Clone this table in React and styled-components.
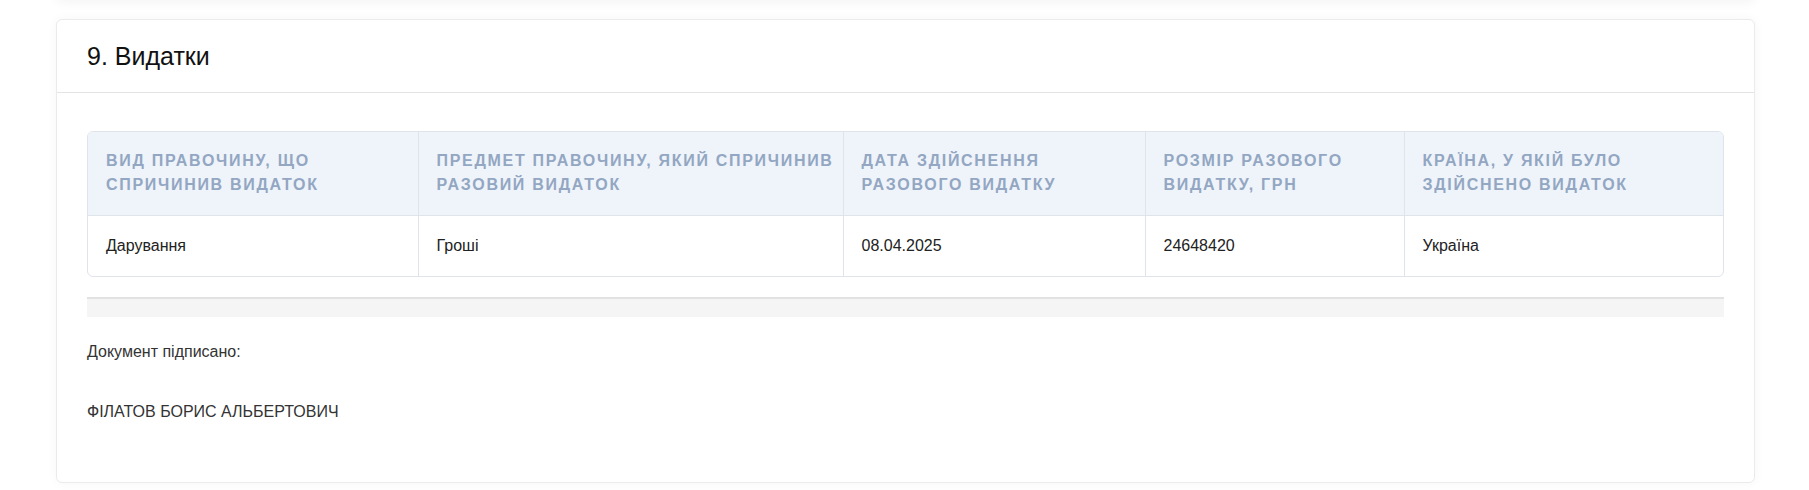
import React from 'react';
import styled, { createGlobalStyle } from 'styled-components';

const GlobalStyle = createGlobalStyle`
  body {
    margin: 0;
    background: #ffffff;
    font-family: "Liberation Sans", Arial, sans-serif;
    color: #222;
  }
`;

const Page = styled.main`
  padding: 0 54px 0 56px;
  overflow: hidden;
  height: 490px;
  box-sizing: border-box;
`;

// bottom edge of the previous section, only its shadow shows
const PrevCard = styled.div`
  height: 20px;
  margin-top: -20px;
  margin-bottom: 19px;
  border-radius: 6px;
  box-shadow: 0 2px 12px rgba(0, 0, 0, 0.05);
`;

const Card = styled.section`
  background: #fff;
  border: 1px solid #ebebeb;
  border-radius: 6px;
  box-shadow: 0 0 12px rgba(0, 0, 0, 0.04);
`;

const CardHeader = styled.div`
  padding: 22px 30px;
  border-bottom: 1px solid #e4e4e4;
`;

const Title = styled.h2`
  margin: 0;
  font-size: 25px;
  line-height: 28px;
  font-weight: 400;
  color: #111;
`;

const CardBody = styled.div`
  padding: 38px 30px 30px;
`;

const TableWrap = styled.div`
  border: 1px solid #dfe4ea;
  border-radius: 6px;
  overflow: hidden;
`;

const Table = styled.table`
  width: 100%;
  border-collapse: collapse;
  table-layout: fixed;
`;

const Th = styled.th`
  background: #eef4fa;
  color: #93a6c2;
  font-size: 16px;
  line-height: 24px;
  font-weight: 700;
  letter-spacing: 1.7px;
  text-transform: uppercase;
  text-align: left;
  vertical-align: top;
  padding: 17px 4px 18px 18px;
  border-left: 1px solid #dfe4ea;
  border-bottom: 1px solid #dfe4ea;

  &:first-child {
    border-left: none;
  }
`;

const Td = styled.td`
  font-size: 16px;
  line-height: 24px;
  color: #222;
  padding: 18px;
  border-left: 1px solid #dfe4ea;

  &:first-child {
    border-left: none;
  }
`;

const ScrollTrack = styled.div`
  margin-top: 20px;
  height: 18px;
  background: #f5f5f5;
  border-top: 2px solid #e2e2e2;
`;

const Signed = styled.div`
  margin-top: 23px;
  font-size: 16px;
  line-height: 24px;
  color: #333;
`;

const Signer = styled.div`
  margin-top: 36px;
  font-size: 16px;
  line-height: 24px;
  color: #333;
  padding-bottom: 28px;
`;

const columns = [
  { title: 'Вид правочину, що спричинив видаток', width: 330 },
  { title: 'Предмет правочину, який спричинив разовий видаток', width: 425 },
  { title: 'Дата здійснення разового видатку', width: 302 },
  { title: 'Розмір разового видатку, грн', width: 259 },
  { title: 'Країна, у якій було здійснено видаток', width: 321 },
];

const rows = [['Дарування', 'Гроші', '08.04.2025', '24648420', 'Україна']];

export default function App() {
  return (
    <>
      <GlobalStyle />
      <Page>
        <PrevCard />
        <Card>
          <CardHeader>
            <Title>9. Видатки</Title>
          </CardHeader>
          <CardBody>
            <TableWrap>
              <Table>
                <colgroup>
                  {columns.map((c) => (
                    <col key={c.title} style={{ width: c.width }} />
                  ))}
                </colgroup>
                <thead>
                  <tr>
                    {columns.map((c) => (
                      <Th key={c.title}>{c.title}</Th>
                    ))}
                  </tr>
                </thead>
                <tbody>
                  {rows.map((r, i) => (
                    <tr key={i}>
                      {r.map((v, j) => (
                        <Td key={j}>{v}</Td>
                      ))}
                    </tr>
                  ))}
                </tbody>
              </Table>
            </TableWrap>
            <ScrollTrack />
            <Signed>Документ підписано:</Signed>
            <Signer>ФІЛАТОВ БОРИС АЛЬБЕРТОВИЧ</Signer>
          </CardBody>
        </Card>
      </Page>
    </>
  );
}
